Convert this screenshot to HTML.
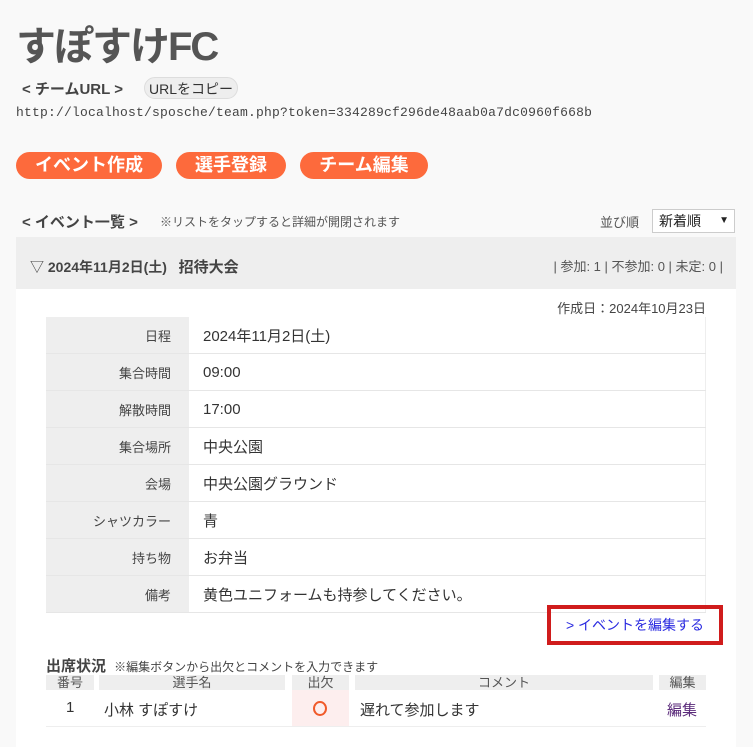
<!DOCTYPE html><html><head><meta charset="utf-8"><style>
body{margin:0;background:#f9f9f9;font-family:"Liberation Sans","Noto Sans CJK JP",sans-serif;color:#333;width:753px;height:747px;overflow:hidden;position:relative}
.a{position:absolute;white-space:nowrap}
h1{position:absolute;left:16px;top:14px;margin:0;font-size:40px;font-weight:bold;color:#555;letter-spacing:-2px}
.btn{position:absolute;top:152px;height:27px;background:#fd6a3c;color:#fff;border-radius:14px;font-size:18px;font-weight:bold;text-align:center;line-height:27px}
.card{position:absolute;left:16px;top:237px;width:720px;height:510px;background:#fff}
table.d{position:absolute;left:46px;top:317px;width:660px;border-collapse:collapse;font-size:15px}
table.d td{height:36px;border-bottom:1px solid #e6e6e6;padding:0}
table.d td.l{width:143px;background:#eee;text-align:right;padding-right:18px;font-size:13px;color:#444;box-sizing:border-box}
table.d td.v{padding-left:14px;border-right:1px solid #eee}
.h{position:absolute;top:675px;height:15px;background:#eee;font-size:13px;text-align:center;line-height:15px;color:#555}
</style></head><body>
<h1>すぽすけFC</h1>
<div class="a" style="left:22px;top:78px;font-size:15px;font-weight:bold;color:#444">&lt; チームURL &gt;</div>
<div class="a" style="left:144px;top:77px;width:94px;height:22px;background:#eee;border:1px solid #ddd;border-radius:11px;font-size:14px;line-height:22px;text-align:center;box-sizing:border-box">URLをコピー</div>
<div class="a" style="left:16px;top:105px;font-family:'Liberation Mono',monospace;font-size:13px;letter-spacing:0.2px;color:#444">http://localhost/sposche/team.php?token=334289cf296de48aab0a7dc0960f668b</div>
<div class="btn" style="left:16px;width:146px">イベント作成</div>
<div class="btn" style="left:176px;width:110px">選手登録</div>
<div class="btn" style="left:300px;width:128px">チーム編集</div>
<div class="a" style="left:22px;top:211px;font-size:15px;font-weight:bold;color:#444">&lt; イベント一覧 &gt;</div>
<div class="a" style="left:160px;top:213px;font-size:12px;color:#555">※リストをタップすると詳細が開閉されます</div>
<div class="a" style="left:600px;top:212px;font-size:13px;color:#555">並び順</div>
<div class="a" style="left:652px;top:209px;width:83px;height:24px;background:#fff;border:1px solid #ccc;box-sizing:border-box;font-size:14px;line-height:22px;padding-left:6px;color:#222">新着順<span style="position:absolute;right:5px;font-size:10px">▼</span></div>
<div class="card"></div>
<div class="a" style="left:16px;top:237px;width:720px;height:52px;background:#eee"></div>
<div class="a" style="left:30px;top:256px;font-size:14px;color:#444">▽ <b>2024年11月2日(土) &nbsp; <span style="font-size:15px">招待大会</span></b></div>
<div class="a" style="right:30px;top:256px;font-size:13px;color:#555">| 参加: 1 | 不参加: 0 | 未定: 0 |</div>
<div class="a" style="right:47px;top:298px;font-size:13px;color:#444">作成日：2024年10月23日</div>
<table class="d">
<tr><td class="l">日程</td><td class="v">2024年11月2日(土)</td></tr>
<tr><td class="l">集合時間</td><td class="v">09:00</td></tr>
<tr><td class="l">解散時間</td><td class="v">17:00</td></tr>
<tr><td class="l">集合場所</td><td class="v">中央公園</td></tr>
<tr><td class="l">会場</td><td class="v">中央公園グラウンド</td></tr>
<tr><td class="l">シャツカラー</td><td class="v">青</td></tr>
<tr><td class="l">持ち物</td><td class="v">お弁当</td></tr>
<tr><td class="l">備考</td><td class="v">黄色ユニフォームも持参してください。</td></tr>
</table>
<div class="a" style="left:547px;top:605px;width:176px;height:40px;border:4px solid #d01c1c;box-sizing:border-box;font-size:14px;color:#2a2ae0;line-height:32px;text-align:center">&gt; イベントを編集する</div>
<div class="a" style="left:46px;top:655px;font-size:15px;font-weight:bold;color:#444">出席状況 <span style="font-size:12px;font-weight:normal;margin-left:4px">※編集ボタンから出欠とコメントを入力できます</span></div>
<div class="h" style="left:46px;width:48px">番号</div>
<div class="h" style="left:99px;width:186px">選手名</div>
<div class="h" style="left:292px;width:57px">出欠</div>
<div class="h" style="left:355px;width:298px">コメント</div>
<div class="h" style="left:659px;width:47px">編集</div>
<div class="a" style="left:292px;top:690px;width:57px;height:36px;background:#fdeeee"></div>
<div class="a" style="left:313px;top:701px;width:10px;height:11px;border:2px solid #f05a2a;border-radius:50%"></div>
<div class="a" style="left:46px;top:726px;width:660px;height:1px;background:#eee"></div>
<div class="a" style="left:66px;top:699px;font-size:15px">1</div>
<div class="a" style="left:104px;top:699px;font-size:15px">小林 すぽすけ</div>
<div class="a" style="left:360px;top:699px;font-size:15px">遅れて参加します</div>
<div class="a" style="left:667px;top:699px;font-size:15px;color:#5a2a7a">編集</div>
</body></html>
